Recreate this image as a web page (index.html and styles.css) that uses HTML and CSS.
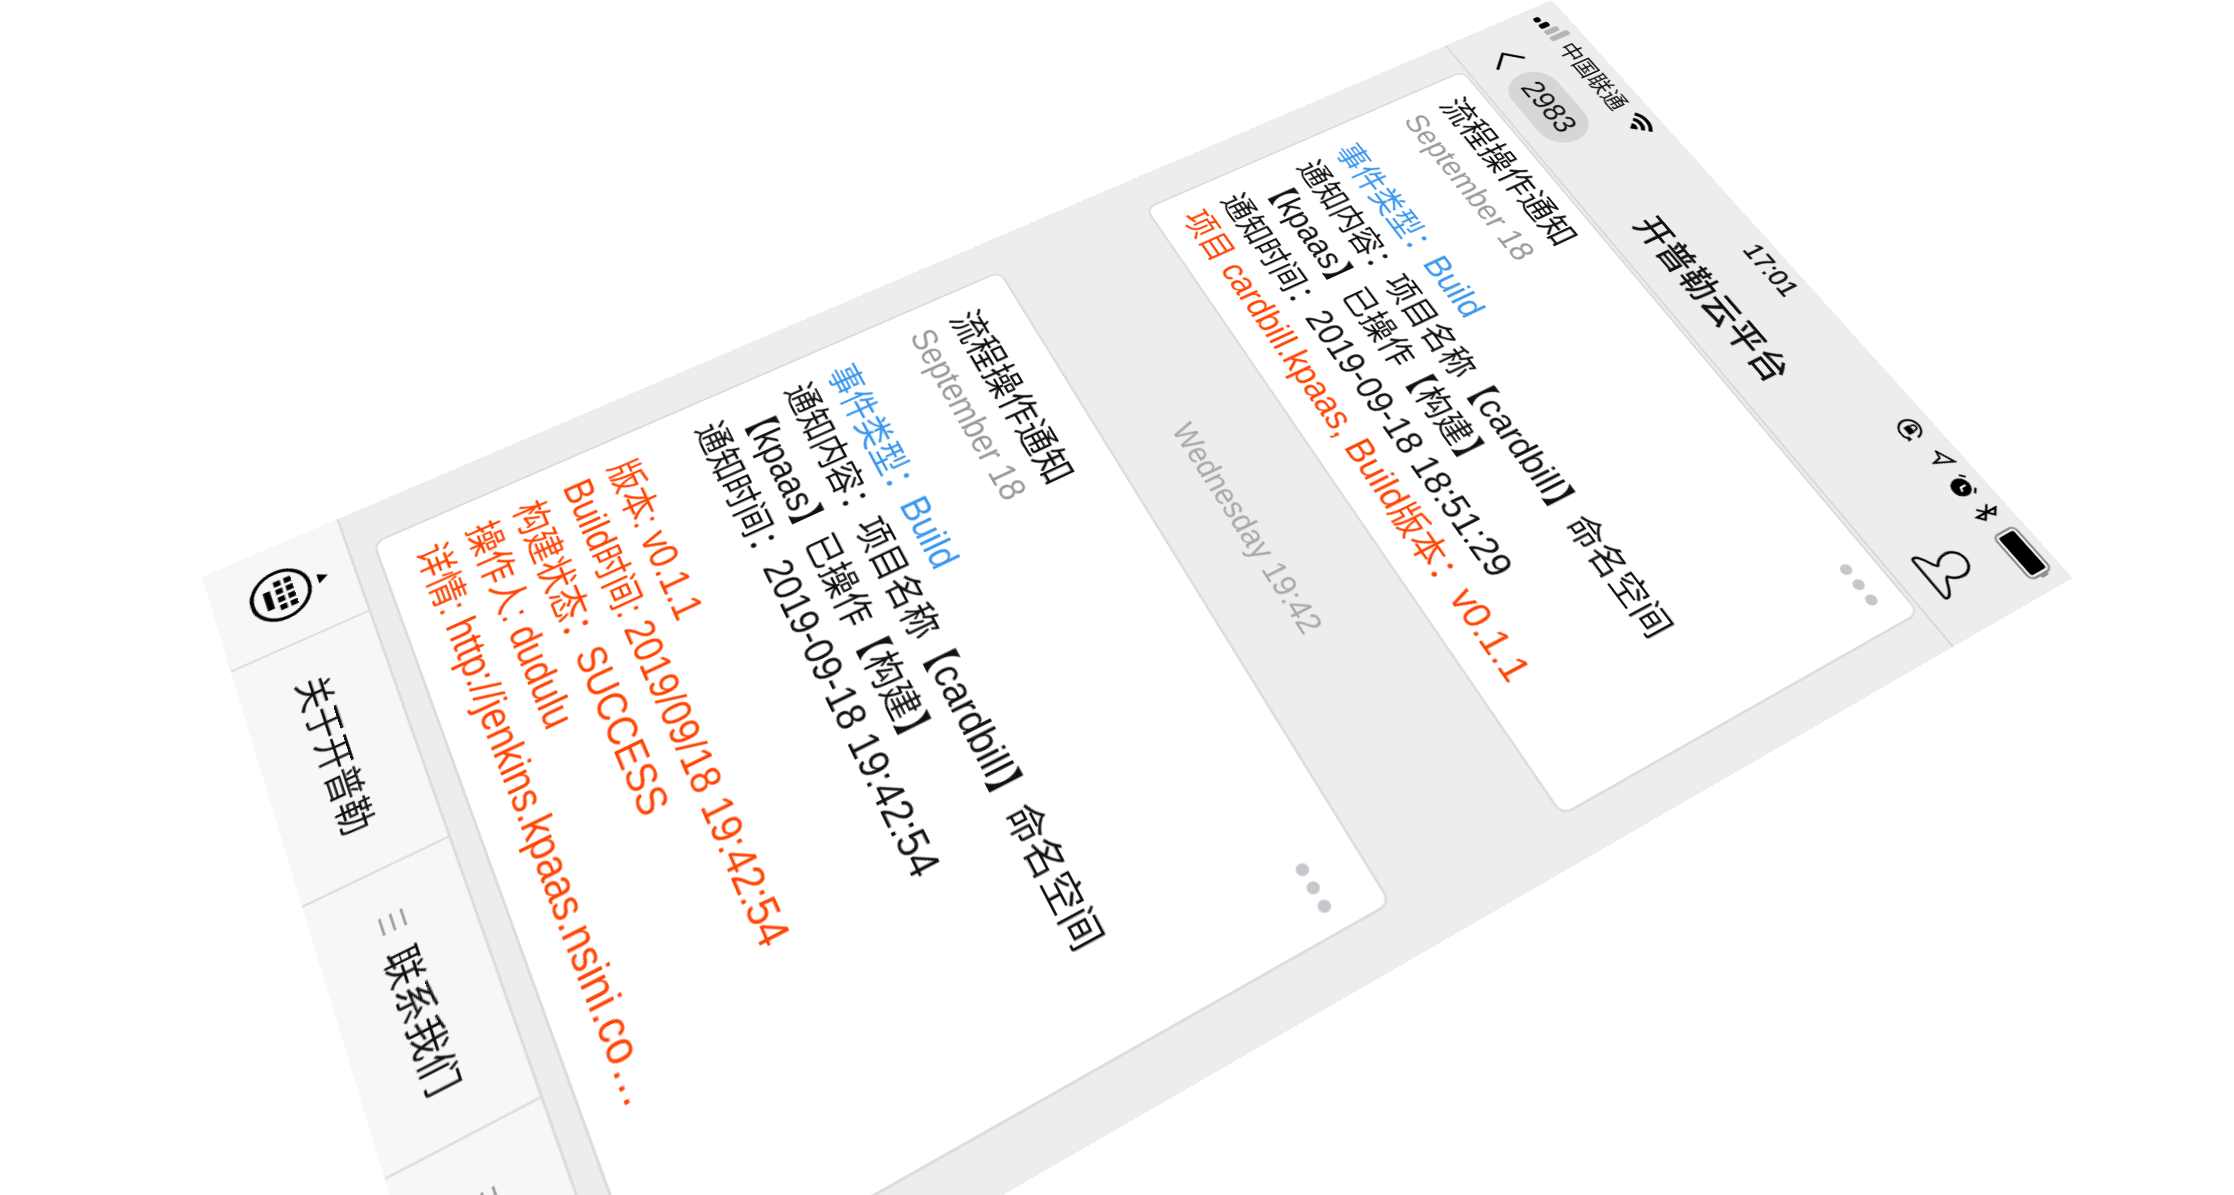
FILE: index.html
```html
<!DOCTYPE html>
<html lang="zh-CN">
<head>
    <meta charset="UTF-8">
    <title>开普勒云平台</title>
    <link rel="stylesheet" href="styles.css">
</head>
<body>

<div class="phone">
    <div class="status-bar">
        <div class="status-left">
            <svg class="signal" width="18" height="11" viewBox="0 0 18 11">
                <rect x="0" y="7.5" width="3.4" height="3.5" rx="1.4" fill="#000"/>
                <rect x="4.8" y="5.5" width="3.4" height="5.5" rx="1.4" fill="#000"/>
                <rect x="9.6" y="3" width="3.4" height="8" rx="1.4" fill="#b5b5b5"/>
                <rect x="14.4" y="0" width="3.4" height="11" rx="1.4" fill="#b5b5b5"/>
            </svg>
            <span class="carrier">中国联通</span>
            <svg class="wifi" width="15" height="12" viewBox="0 0 14 11">
                <path d="M1 4 A9 9 0 0 1 13 4" fill="none" stroke="#000" stroke-width="1.8"/>
                <path d="M3.2 6.4 A6 6 0 0 1 10.8 6.4" fill="none" stroke="#000" stroke-width="1.8"/>
                <path d="M4.8 8.3 A3.2 3.2 0 0 1 9.2 8.3 L7 10.7 Z" fill="#000"/>
            </svg>
        </div>
        <div class="status-time">17:01</div>
        <div class="status-right">
            <svg width="11" height="11" viewBox="0 0 11 11">
                <path d="M8.9 9.2 A4.8 4.8 0 1 1 10.2 5.5" fill="none" stroke="#000" stroke-width="1"/>
                <path d="M7.6 8.6 L10 10.6 L9.8 8.2 Z" fill="#000"/>
                <rect x="3.4" y="4.8" width="4.2" height="3" fill="#000"/>
                <path d="M4.2 4.8 V3.9 A1.3 1.3 0 0 1 6.8 3.9 V4.8" fill="none" stroke="#000" stroke-width=".8"/>
            </svg>
            <svg class="icon-gap-location" width="9" height="10" viewBox="0 0 9 10">
                <path d="M8.3 .8 L4.6 9 L3.8 5.2 L.6 4.4 Z" fill="none" stroke="#000" stroke-width=".9"/>
            </svg>
            <svg class="icon-gap-alarm" width="11" height="11" viewBox="0 0 11 11">
                <circle cx="5.5" cy="6" r="4.4" fill="#000"/>
                <path d="M5.5 3.6 V6.2 L7.4 6.9" fill="none" stroke="#fff" stroke-width=".9"/>
                <path d="M.4 2.8 L2.4 .8 M10.6 2.8 L8.6 .8" stroke="#000" stroke-width="1"/>
            </svg>
            <svg class="icon-gap-bt" width="8" height="12" viewBox="0 0 8 12">
                <path d="M1 3.2 L6.6 8.6 L4 11 V1 L6.6 3.4 L1 8.8" fill="none" stroke="#000" stroke-width="1"/>
            </svg>
            <div class="battery"><div class="battery-fill"></div></div>
        </div>
    </div>

    <div class="nav-bar">
        <div class="nav-left">
            <svg width="10" height="18" viewBox="0 0 10 18">
                <path d="M9 1 L1.4 9 L9 17" fill="none" stroke="#000" stroke-width="1.4"/>
            </svg>
            <span class="badge">2983</span>
        </div>
        <div class="nav-title">开普勒云平台</div>
        <div class="nav-right">
            <svg width="23" height="23" viewBox="0 0 20 20">
                <path d="M7.5 12.5 C5.5 11 5 9 5 7 A5 5 0 0 1 15 7 C15 9 14.5 11 12.5 12.5 C12.5 14 18 15 19 17.5 Q19.5 19 18 19 H2 Q.5 19 1 17.5 C2 15 7.5 14 7.5 12.5 Z" fill="none" stroke="#000" stroke-width="1"/>
            </svg>
        </div>
    </div>

    <div class="chat">
        <div class="card card-first">
            <div class="dots"><i></i><i></i><i></i></div>
            <div class="card-title">流程操作通知</div>
            <div class="card-date">September 18</div>
            <div class="card-group">
                <div class="blue">事件类型：<span class="en">Build</span></div>
                <div>通知内容：项目名称【<span class="en">cardbill</span>】命名空间【<span class="en">kpaas</span>】已操作【构建】</div>
                <div>通知时间：<span class="en">2019-09-18 18:51:29</span></div>
                <div class="red">项目 <span class="en">cardbill.kpaas, Build</span>版本：<span class="en">v0.1.1</span></div>
            </div>
        </div>

        <div class="time-label">Wednesday 19:42</div>

        <div class="card card-second">
            <div class="dots"><i></i><i></i><i></i></div>
            <div class="card-title">流程操作通知</div>
            <div class="card-date">September 18</div>
            <div class="card-group">
                <div class="blue">事件类型：<span class="en">Build</span></div>
                <div>通知内容：项目名称【<span class="en">cardbill</span>】命名空间【<span class="en">kpaas</span>】已操作【构建】</div>
                <div>通知时间：<span class="en">2019-09-18 19:42:54</span></div>
            </div>
            <div class="card-group red">
                <div>版本: <span class="en">v0.1.1</span></div>
                <div><span class="en">Build</span>时间: <span class="en">2019/09/18 19:42:54</span></div>
                <div>构建状态：<span class="en">SUCCESS</span></div>
                <div>操作人: <span class="en">dudulu</span></div>
                <div>详情: <span class="en">http://jenkins.kpaas.nsini.co…</span></div>
            </div>
        </div>
    </div>

    <div class="tab-bar">
        <div class="tab-keyboard">
            <svg width="26" height="36" viewBox="0 0 26 36">
                <path d="M13 0 L15.4 4 H10.6 Z" fill="#000"/>
                <circle cx="13" cy="19" r="11.4" fill="none" stroke="#000" stroke-width="1.5"/>
                <g fill="#000">
                    <rect x="5.8" y="13.6" width="2.6" height="2.8"/>
                    <rect x="9.7" y="13.6" width="2.6" height="2.8"/>
                    <rect x="13.6" y="13.6" width="2.6" height="2.8"/>
                    <rect x="17.5" y="13.6" width="2.6" height="2.8"/>
                    <rect x="5.8" y="17.8" width="2.6" height="2.8"/>
                    <rect x="9.7" y="17.8" width="2.6" height="2.8"/>
                    <rect x="13.6" y="17.8" width="2.6" height="2.8"/>
                    <rect x="17.5" y="17.8" width="2.6" height="2.8"/>
                    <rect x="9" y="22.6" width="9" height="2.8"/>
                </g>
            </svg>
        </div>
        <div class="tab-item">关于开普勒</div>
        <div class="tab-item"><span class="menu-icon"><i></i><i></i><i></i></span>联系我们</div>
        <div class="tab-item tab-item-last"><span class="menu-icon"><i></i><i></i><i></i></span></div>
    </div>
</div>

</body>
</html>
```

FILE: styles.css
```css
html, body {
    margin: 0;
    width: 100%;
    height: 100%;
    overflow: hidden;
    background-color: #ffffff;
}

/* flat 375x667 phone, tilted onto the page */
.phone {
    width: 375px;
    height: 667px;
    display: flex;
    flex-direction: column;
    background-color: #ededed;
    color: #111111;
    font-family: "Liberation Sans", "Noto Sans CJK SC", sans-serif;
    transform-origin: 0 0;
    transform: matrix3d(0.36827, 1.2568, 0, -0.00049208, -2.08051, 0.7036, 0, -0.00027995, 0, 0, 1, 0, 1552, 0, 0, 1);
}

.status-bar {
    height: 20px;
    flex: none;
    display: grid;
    grid-template-columns: 1fr auto 1fr;
    align-items: center;
    padding: 0 7.4px 0 6px;
    box-sizing: border-box;
    font-size: 12px;
}

.status-left,
.status-right {
    display: flex;
    align-items: center;
}

.status-right {
    justify-content: flex-end;
}

.carrier {
    margin-left: 4px;
}

.wifi {
    margin-left: 5px;
}

.status-time {
    margin-left: 4px;
    font-size: 12.5px;
    -webkit-text-stroke: 0.25px #000000;
}

.icon-gap-location {
    margin-left: 8px;
    margin-bottom: 2px;
}

.icon-gap-alarm {
    margin-left: 5.5px;
}

.icon-gap-bt {
    margin-left: 5px;
}

.battery {
    position: relative;
    width: 24px;
    height: 11.5px;
    margin-left: 5.6px;
    padding: 1px;
    box-sizing: border-box;
    border: 1px solid #8e8e8e;
    border-radius: 3px;
}

.battery-fill {
    height: 100%;
    background-color: #000000;
    border-radius: 1px;
}

/* battery nub */
.battery::after {
    content: "";
    position: absolute;
    top: 2.2px;
    right: -2.6px;
    width: 1.4px;
    height: 4px;
    background-color: #8e8e8e;
    border-radius: 0 1px 1px 0;
}

.nav-bar {
    height: 44px;
    flex: none;
    display: grid;
    grid-template-columns: 1fr auto 1fr;
    align-items: center;
    padding: 0 17px;
    box-sizing: border-box;
    border-bottom: 1px solid #dadada;
}

.nav-left {
    display: flex;
    align-items: center;
}

.nav-right {
    display: flex;
    justify-content: flex-end;
}

.badge {
    margin-left: 7px;
    width: 48px;
    height: 26px;
    border-radius: 13px;
    background-color: #d6d6d6;
    font-size: 15.5px;
    line-height: 26px;
    text-align: center;
}

.nav-title {
    font-size: 17px;
    font-weight: 500;
}

.chat {
    flex: 1;
    min-height: 0;
    padding: 1px 18.5px 0 18px;
}

.card {
    position: relative;
    box-sizing: border-box;
    background-color: #ffffff;
    border: 1px solid #dcdcdc;
    border-radius: 5px;
    padding: 0 12px;
    font-size: 15.4px;
    line-height: 20.5px;
}

.card-first {
    height: 175.5px;
    padding-top: 6px;
}

.card-second {
    height: 287px;
    margin-right: 3px;
    padding-top: 15px;
}

.card-title {
    font-size: 16.7px;
}

.card-date {
    font-size: 15.6px;
    color: #999999;
}

.card-group {
    margin-top: 18px;
}

.en {
    font-size: 16.3px;
    line-height: 1;
}

.blue {
    color: #3a97ee;
}

.red {
    color: #ff4300;
}

.dots {
    position: absolute;
    top: 10px;
    right: 11px;
    display: flex;
    gap: 2.6px;
}

.card-second .dots {
    top: 19px;
    right: 8px;
}

.dots i {
    width: 5px;
    height: 5px;
    border-radius: 50%;
    background-color: #c6c6cc;
}

.time-label {
    height: 74px;
    padding-top: 10px;
    box-sizing: border-box;
    display: flex;
    align-items: center;
    justify-content: center;
    font-size: 14px;
    color: #a8a8a8;
}

.tab-bar {
    height: 56px;
    flex: none;
    display: grid;
    grid-template-columns: 48px repeat(3, 1fr);
    background-color: #f7f7f7;
    border-top: 1px solid #dcdcdc;
    box-sizing: border-box;
    font-size: 14.5px;
}

.tab-keyboard {
    display: flex;
    align-items: center;
    justify-content: center;
}

.tab-item {
    display: flex;
    align-items: center;
    justify-content: center;
    border-left: 1px solid #dfdfdf;
}

.tab-item-last {
    justify-content: flex-start;
    padding-left: 19.5px;
}

.menu-icon {
    display: flex;
    flex-direction: column;
    gap: 2.6px;
    margin-right: 8px;
}

.menu-icon i {
    width: 7px;
    height: 1.2px;
    background-color: #a3a3a3;
}
```
